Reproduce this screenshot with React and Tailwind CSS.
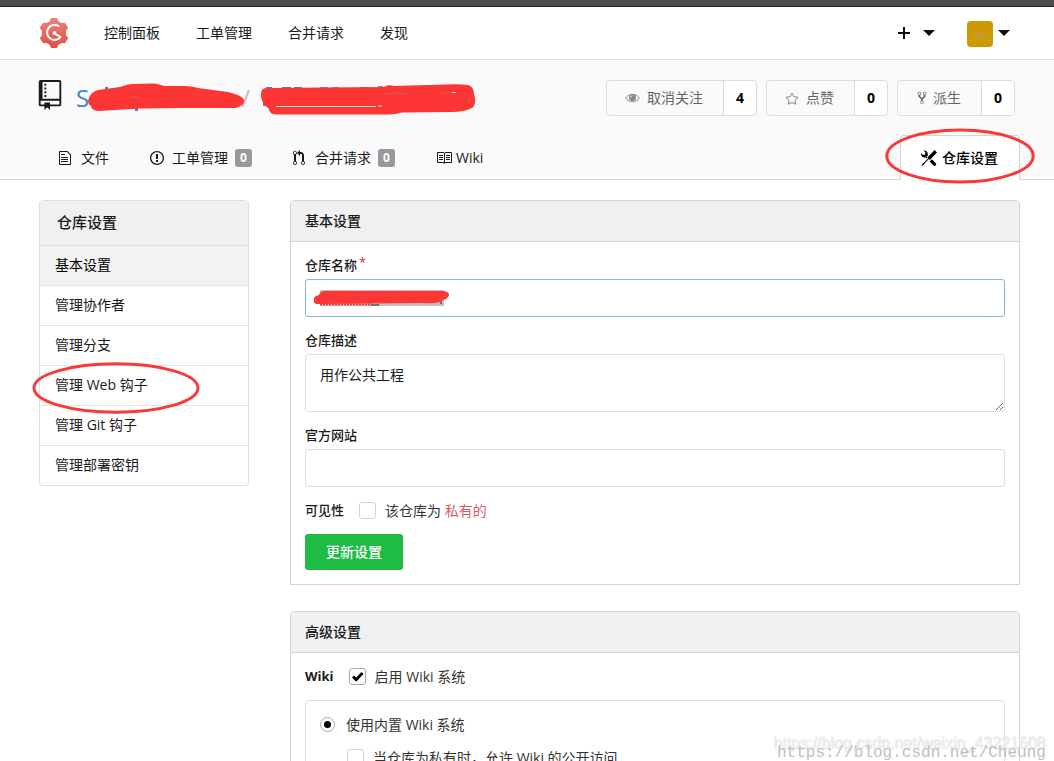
import React from 'react';

const Octicon = ({ path, box, className }) => (
  <svg viewBox={box} className={className} fill="currentColor" aria-hidden="true">
    <path d={path} />
  </svg>
);

const icons = {
  repo: 'M4 9H3V8h1v1zm0-3H3v1h1V6zm0-2H3v1h1V4zm0-2H3v1h1V2zm8-1v12c0 .55-.45 1-1 1H6v2l-1.5-1.5L3 16v-2H1c-.55 0-1-.45-1-1V1c0-.55.45-1 1-1h10c.55 0 1 .45 1 1zm-1 10H1v2h2v-1h3v1h5v-2zm0-10H2v9h9V1z',
  file: 'M6 5H2V4h4v1zM2 8h7V7H2v1zm0 2h7V9H2v1zm0 2h7v-1H2v1zm10-7.5V14c0 .55-.45 1-1 1H1c-.55 0-1-.45-1-1V2c0-.55.45-1 1-1h7.5L12 4.5zM11 5L8 2H1v12h10V5z',
  issue: 'M7 2.3c3.14 0 5.7 2.56 5.7 5.7s-2.56 5.7-5.7 5.7A5.71 5.71 0 0 1 1.3 8c0-3.14 2.56-5.7 5.7-5.7zM7 1C3.14 1 0 4.14 0 8s3.14 7 7 7 7-3.14 7-7-3.14-7-7-7zm1 3H6v5h2V4zm0 6H6v2h2v-2z',
  pull: 'M11 11.28V5c-.03-.78-.34-1.47-.94-2.06C9.46 2.35 8.78 2.03 8 2H7V0L4 3l3 3V4h1c.27.02.48.11.69.31.21.2.3.42.31.69v6.28A1.993 1.993 0 0 0 10 15a1.993 1.993 0 0 0 1-3.72zm-1 2.92c-.66 0-1.2-.55-1.2-1.2 0-.65.55-1.2 1.2-1.2.65 0 1.2.55 1.2 1.2 0 .65-.55 1.2-1.2 1.2zM4 3c0-1.11-.89-2-2-2a1.993 1.993 0 0 0-1 3.72v6.56A1.993 1.993 0 0 0 2 15a1.993 1.993 0 0 0 1-3.72V4.72c.59-.34 1-.98 1-1.72zm-.8 10c0 .66-.55 1.2-1.2 1.2-.65 0-1.2-.55-1.2-1.2 0-.65.55-1.2 1.2-1.2.65 0 1.2.55 1.2 1.2zM2 4.2C1.34 4.2.8 3.65.8 3c0-.65.55-1.2 1.2-1.2.65 0 1.2.55 1.2 1.2 0 .65-.55 1.2-1.2 1.2z',
  book: 'M3 5h4v1H3V5zm0 3h4V7H3v1zm0 2h4V9H3v1zm11-5h-4v1h4V5zm0 2h-4v1h4V7zm0 2h-4v1h4V9zm2-6v9c0 .55-.45 1-1 1H9.5l-1 1-1-1H2c-.55 0-1-.45-1-1V3c0-.55.45-1 1-1h5.5l1 1 1-1H15c.55 0 1 .45 1 1zm-8 .5L7.5 3H2v9h6V3.5zm7-.5H9.5l-.5.5V12h6V3z',
  tools: 'M4.48 7.27c.26.26 1.28 1.33 1.28 1.33l.56-.58-.88-.91 1.69-1.8s-.76-.74-.43-.45c.32-1.19.03-2.51-.87-3.44C4.93.5 3.66.2 2.52.51l1.93 2-.51 1.96-1.89.52-1.93-1.99C-.19 4.17.1 5.48 1 6.4c.94.98 2.29 1.26 3.48.87zm6.44 1.94l-2.33 2.3 3.84 3.98c.31.33.73.49 1.14.49.41 0 .82-.16 1.14-.49.63-.65.63-1.7 0-2.35l-3.79-3.93zM16 2.53L13.55 0 6.33 7.46l.88.91-4.31 4.46-.99.53-1.39 2.27.35.37 2.2-1.44.51-1.02L7.9 9.08l.88.91L16 2.53z',
  fork: 'M8 1a1.993 1.993 0 0 0-1 3.72V6L5 8 3 6V4.72A1.993 1.993 0 0 0 2 1a1.993 1.993 0 0 0-1 3.72V6.5l3 3v1.78A1.993 1.993 0 0 0 5 15a1.993 1.993 0 0 0 1-3.72V9.5l3-3V4.72A1.993 1.993 0 0 0 8 1zM2 4.2C1.34 4.2.8 3.65.8 3c0-.65.55-1.2 1.2-1.2.65 0 1.2.55 1.2 1.2 0 .65-.55 1.2-1.2 1.2zm3 10c-.66 0-1.2-.55-1.2-1.2 0-.65.55-1.2 1.2-1.2.65 0 1.2.55 1.2 1.2 0 .65-.55 1.2-1.2 1.2zm3-10c-.66 0-1.2-.55-1.2-1.2 0-.65.55-1.2 1.2-1.2.65 0 1.2.55 1.2 1.2 0 .65-.55 1.2-1.2 1.2z',
};

const Logo = () => (
  <svg viewBox="0 0 28 30" className="h-[30px] w-7" aria-hidden="true">
    <defs>
      <linearGradient id="gear" gradientUnits="userSpaceOnUse" x1="0" y1="0" x2="0" y2="30">
        <stop offset="0" stopColor="#e8857c" />
        <stop offset="1" stopColor="#dd4f45" />
      </linearGradient>
    </defs>
    <path
      fill="url(#gear)"
      d="M10.500 1q.2-1 1-1h5q.8 0 1 1l.8 2.200 3.200 1.900 2.700-.3q.9 0 1.300.8l2.300 3.600q.4.800-.2 1.500L26 12.800v4.400l1.600 2.100q.6.700.2 1.500l-2.300 3.600q-.4.800-1.300.8l-2.700-.3-3.200 1.900-.8 2.200q-.2 1-1 1h-5q-.8 0-1-1l-.8-2.200-3.200-1.900-2.700.3q-.9 0-1.300-.8L.2 20.800q-.4-.8.2-1.500L2 17.200v-4.400L.4 10.700q-.6-.7-.2-1.500l2.300-3.600q.4-.8 1.300-.8l2.700.3 3.200-1.900z"
    />
    <path d="M18.500 8A7.500 7.500 0 1 0 20.500 19L14.500 15.500" fill="none" stroke="#fff" strokeWidth="2" strokeLinecap="round" strokeLinejoin="round" />
    <circle cx="14.500" cy="15" r="1.900" fill="#fff" />
  </svg>
);

const Caret = () => (
  <svg viewBox="0 0 12 6" className="h-1.5 w-3" fill="#111" aria-hidden="true">
    <path d="M0 0h12L6 6z" />
  </svg>
);

const EyeIcon = () => (
  <svg viewBox="0 0 15 10" className="h-2.5 w-[15px]" aria-hidden="true">
    <path d="M.6 5C3.600.2 11.400.2 14.400 5 11.400 9.800 3.600 9.800.6 5z" fill="none" stroke="#888" />
    <circle cx="7.500" cy="4.500" r="3.500" fill="#888" />
    <path d="M5.700 4.500a1.800 1.800 0 0 1 1.800-1.800" fill="none" stroke="#fff" strokeWidth=".8" />
  </svg>
);

const StarIcon = () => (
  <svg viewBox="0 0 14 13" className="h-[13px] w-3.5" fill="none" stroke="#888" aria-hidden="true">
    <path d="M7 1l1.800 3.700 4.200.6-3 2.900.7 4.100L7 10.400l-3.700 1.900.7-4.100-3-2.900 4.200-.6z" />
  </svg>
);

const Circled = ({ className }) => (
  <svg viewBox="0 0 168 56" preserveAspectRatio="none" className={className} aria-hidden="true">
    <ellipse cx="84" cy="28" rx="82" ry="26" fill="none" stroke="#f93a3a" strokeWidth="3" vectorEffect="non-scaling-stroke" />
  </svg>
);

const navItems = ['控制面板', '工单管理', '合并请求', '发现'];

const repoTabs = [
  { label: '文件', icon: 'file', box: '0 0 12 16', size: 'w-3', gap: 'gap-2.5' },
  { label: '工单管理', icon: 'issue', box: '0 0 14 16', size: 'w-3.5', gap: 'gap-2' },
  { label: '合并请求', icon: 'pull', box: '0 0 12 16', size: 'w-3', gap: 'gap-2.5' },
  { label: 'Wiki', icon: 'book', box: '0 0 16 16', size: 'w-4', gap: 'gap-1' },
];

const tabCounts = { issue: 0, pull: 0 };

const actions = [
  { label: '取消关注', count: 4, icon: <EyeIcon />, pad: 'pl-[18px] pr-5 gap-[7px]' },
  { label: '点赞', count: 0, icon: <StarIcon />, pad: 'pl-[18px] pr-5 gap-[7px]' },
  { label: '派生', count: 0, icon: <Octicon path={icons.fork} box="0 0 10 16" className="h-3.5 w-2.5" />, pad: 'pl-[19px] pr-5 gap-1.5' },
];

const menu = ['基本设置', '管理协作者', '管理分支', '管理 Web 钩子', '管理 Git 钩子', '管理部署密钥'];

const Panel = ({ title, children }) => (
  <section className="rounded-t border border-[#d4d4d5]">
    <h4 className="flex h-[41px] items-center rounded-t border-b border-[#d4d4d5] bg-[#f0f0f0] px-3.5 font-medium">{title}</h4>
    <div className="flex flex-col gap-3.5 p-3.5">{children}</div>
  </section>
);

const Field = ({ id, label, required, children }) => (
  <div className="flex flex-col gap-1">
    <label htmlFor={id} className="text-[13px] leading-[19px] font-medium">
      {label}
      {required && <span className="ml-0.5 align-top leading-3 font-normal text-[#db2828]">*</span>}
    </label>
    {children}
  </div>
);

const Checkbox = ({ id, checked, label }) => (
  <div className="flex h-[19px] items-center gap-[9px] text-[#333]">
    <span className="relative flex">
      <input
        id={id}
        type="checkbox"
        defaultChecked={checked}
        className="peer size-[17px] appearance-none rounded-[3px] border border-[#d4d4d5] bg-white checked:border-[#aaa]"
      />
      <svg viewBox="0 0 17 17" className="pointer-events-none absolute inset-0 hidden size-[17px] peer-checked:block" aria-hidden="true">
        <path d="M4 8.500l3.200 3.200L13.500 5" fill="none" stroke="#000" strokeWidth="2.800" />
      </svg>
    </span>
    <label htmlFor={id}>{label}</label>
  </div>
);

const TopNav = () => (
  <nav className="flex h-[53px] items-center border-b border-[#ddd] pr-11 pl-10">
    <a href="#" aria-label="Gogs"><Logo /></a>
    <div className="ml-9 flex gap-9">
      {navItems.map((item) => (
        <a key={item} href="#">{item}</a>
      ))}
    </div>
    <div className="ml-auto flex items-center">
      <button type="button" aria-label="创建" className="flex items-center gap-[13px]">
        <svg viewBox="0 0 12 12" className="size-3" stroke="#111" strokeWidth="2" aria-hidden="true">
          <path d="M6 0v12M0 6h12" />
        </svg>
        <Caret />
      </button>
      <button type="button" aria-label="用户" className="ml-8 flex items-center gap-[5px]">
        <svg viewBox="0 0 26 26" className="mt-0.5 size-[26px] rounded" aria-hidden="true">
          <rect width="26" height="26" fill="#cc9900" />
          <path d="M9 9l4 3 4-3 1 4 3 2-4 1-1 4-3-3-4 2-1-4-3-2 4-1zM5 4l3 2-3 2zM18 4l3 2-3 2z" fill="#c99b2d" />
        </svg>
        <Caret />
      </button>
    </div>
  </nav>
);

const RepoHeader = () => (
  <header className="border-b border-[#d9d9d9] bg-[#fafafa] pt-5 pr-[34px] pl-[38px]">
    <div className="flex h-9 items-start justify-between">
      <div className="flex h-9">
        <Octicon path={icons.repo} box="0 0 12 16" className="mr-3.5 h-[30px] w-6" />
        <h1 className="relative flex w-[400px] items-center text-2xl text-[#4183c4]">
          <a href="#">S</a>
          <span className="ml-[152px] text-[#bbb]">/</span>
          <svg viewBox="0 0 400 40" className="absolute top-0 left-0 h-10 w-[400px]" aria-hidden="true">
            <path d="M29 7h3v4h-3zM59 27h3v4h-3zM190 7h6v3h-6zM206 7h9v3h-9zM218 7h8v3h-8zM187 23h3v3h-3z" fill="#4183c4" />
            <path d="M244 8h8M256 8h7M285 8h8M302 7h5" stroke="#a080b0" strokeWidth="2" />
            <path
              d="M12 21Q14 12 22 10L44 7Q52 4 57 4L78 3.500Q84 4 88 6L108 6Q116 6 122 8L152 12Q166 15 168 20Q169 25 160 28L104 28L64 28.500L22 31Q15 30 15 26Q12 24 12 21zM185 14Q185 8 190 8L308 7Q312 4 318 6L370 4.500Q385 4 392 5Q398 7 398 14Q401 24 396 28Q388 32 376 32L326 32.500Q318 35 310 34.500L200 34.500Q193 34 193 29Q184 22 185 14z"
              fill="#fc3535"
            />
            <path d="M200 26.500h100M302 26h4M376 12.500h4" fill="none" stroke="#f7dada" />
            <path d="M54 17h8M310 14q12-2 20 0M364 13h12M393 13v9" fill="none" stroke="#e06070" strokeWidth=".8" />
          </svg>
        </h1>
      </div>
      <div className="mr-[5px] flex gap-[9px]">
        {actions.map(({ label, count, icon, pad }) => (
          <div key={label} className="flex h-9 rounded border border-[#dcdcdc] text-[#666]">
            <button type="button" className={`flex items-center ${pad}`}>
              {icon}
              {label}
            </button>
            <a href="#" className="flex w-[33px] items-center justify-center rounded-r border-l border-[#dcdcdc] bg-white font-bold text-black">
              {count}
            </a>
          </div>
        ))}
      </div>
    </div>
    <div className="mt-[19px] -mb-px flex h-[45px] items-center">
      <div className="ml-[21px] flex gap-[41px]">
        {repoTabs.map(({ label, icon, box, size, gap }) => (
          <a key={label} href="#" className="flex items-center gap-[7px]">
            <span className={`flex items-center ${gap}`}>
              <Octicon path={icons[icon]} box={box} className={`h-4 ${size}`} />
              {label}
            </span>
            {icon in tabCounts && (
              <span className="flex h-[18px] w-[17px] items-center justify-center rounded-[3px] bg-[#999] text-xs font-bold text-white">{tabCounts[icon]}</span>
            )}
          </a>
        ))}
      </div>
      <a href="#" className="relative ml-auto flex h-full items-center gap-[5px] rounded-t border border-b-0 border-[#d4d4d5] bg-white pr-[21px] pl-5 font-medium text-black">
        <Octicon path={icons.tools} box="0 0 16 16" className="size-4" />
        仓库设置
        <Circled className="pointer-events-none absolute -top-2 -left-4 h-14 w-[150px]" />
      </a>
    </div>
  </header>
);

const Sidebar = () => (
  <aside className="w-[210px] shrink-0 self-start rounded border border-[#dedede]">
    <h4 className="flex h-[45px] items-center rounded-t border-b border-[#dedede] bg-[#f0f0f0] px-[17px] text-[15px] font-medium">仓库设置</h4>
    <ul>
      {menu.map((item, i) => (
        <li key={item} className="relative border-b border-[#e5e5e5] last:border-b-0">
          <a href="#" className={i === 0 ? 'flex h-[39px] items-center bg-[#f2f2f2] px-[15px] pb-0.5 text-black' : 'flex h-[39px] items-center px-[15px] pb-0.5'}>
            {item}
          </a>
          {item === '管理 Web 钩子' && <Circled className="pointer-events-none absolute -top-1 -left-2 z-10 h-[52px] w-[168px]" />}
        </li>
      ))}
    </ul>
  </aside>
);

const App = () => {
  return (
    <div className="relative h-screen overflow-hidden bg-white font-['Open_Sans','Noto_Sans_CJK_SC',sans-serif] text-sm text-[#1a1a1a]">
      <div className="h-[7px] border-b border-[#262626] bg-[#4d4d4d]" />
      <TopNav />
      <RepoHeader />
      <div className="flex gap-[41px] pt-5 pr-[34px] pl-[39px]">
        <Sidebar />
        <main className="flex min-w-0 flex-1 flex-col gap-[26px]">
          <Panel title="基本设置">
            <Field id="name" label="仓库名称" required>
              <div className="relative flex">
                <input id="name" type="text" className="h-[38px] w-full rounded-[3px] border border-[#85b7d9] px-3.5 outline-none" />
                <svg viewBox="0 0 140 20" className="pointer-events-none absolute top-2.5 left-2 h-5 w-[140px]" aria-hidden="true">
                  <path d="M7 1h124v16H7z" fill="#c0c0c0" />
                  <path d="M7 15.500h50" stroke="#f33" strokeWidth="2" strokeDasharray="2 1" />
                  <path d="M58 16h8M128 12v3" stroke="#222" />
                  <path d="M1 10q0-3 5-4 1-4 6-4l117 0q7 0 7 4-1 4-6 5-3 4-20 3l-104 1q-5 0-5-2z" fill="#fc3535" />
                </svg>
              </div>
            </Field>
            <Field id="description" label="仓库描述">
              <textarea id="description" defaultValue="用作公共工程" className="h-[58px] rounded-[3px] border border-[#dedede] px-3.5 py-2.5 outline-none" />
            </Field>
            <Field id="website" label="官方网站">
              <input id="website" type="url" className="h-[38px] rounded-[3px] border border-[#dedede] px-3.5 outline-none" />
            </Field>
            <div className="flex items-center gap-[15px]">
              <span className="text-[13px] leading-[19px] font-medium">可见性</span>
              <Checkbox id="private" label={<>该仓库为 <span className="text-[#d95c5c]">私有的</span></>} />
            </div>
            <button type="submit" className="h-9 self-start rounded-[3px] bg-[#1ebb45] px-[21px] font-medium text-white">更新设置</button>
          </Panel>
          <Panel title="高级设置">
            <div className="flex items-center gap-[15px]">
              <span className="text-[13px] leading-[19px] font-bold">Wiki</span>
              <Checkbox id="wiki" checked label="启用 Wiki 系统" />
            </div>
            <div className="flex flex-col gap-3.5 rounded border border-[#dedede] p-3.5">
              <div className="flex h-[19px] items-center gap-[11px] text-[#333]">
                <input
                  id="internal-wiki"
                  type="radio"
                  name="wiki-type"
                  defaultChecked
                  className="flex size-[15px] appearance-none items-center justify-center rounded-full border border-[#aaa] before:size-[7px] before:rounded-full checked:before:bg-black"
                />
                <label htmlFor="internal-wiki">使用内置 Wiki 系统</label>
              </div>
              <div className="ml-[27px]">
                <Checkbox id="public-wiki" label="当仓库为私有时，允许 Wiki 的公开访问" />
              </div>
            </div>
          </Panel>
        </main>
      </div>
      <div className="pointer-events-none absolute right-0 bottom-0 h-7 w-[281px] whitespace-nowrap">
        <p className="font-['Liberation_Sans',sans-serif] text-base leading-5 text-[#f0f0f0] [text-shadow:1px_1px_1px_#ddd]">https://blog.csdn.net/weixin_43221608</p>
        <p className="absolute top-2 left-1 font-['Liberation_Mono',monospace] text-base leading-6 text-[#c0c0bc]">https://blog.csdn.net/Cheung</p>
      </div>
    </div>
  );
};

export default App;
